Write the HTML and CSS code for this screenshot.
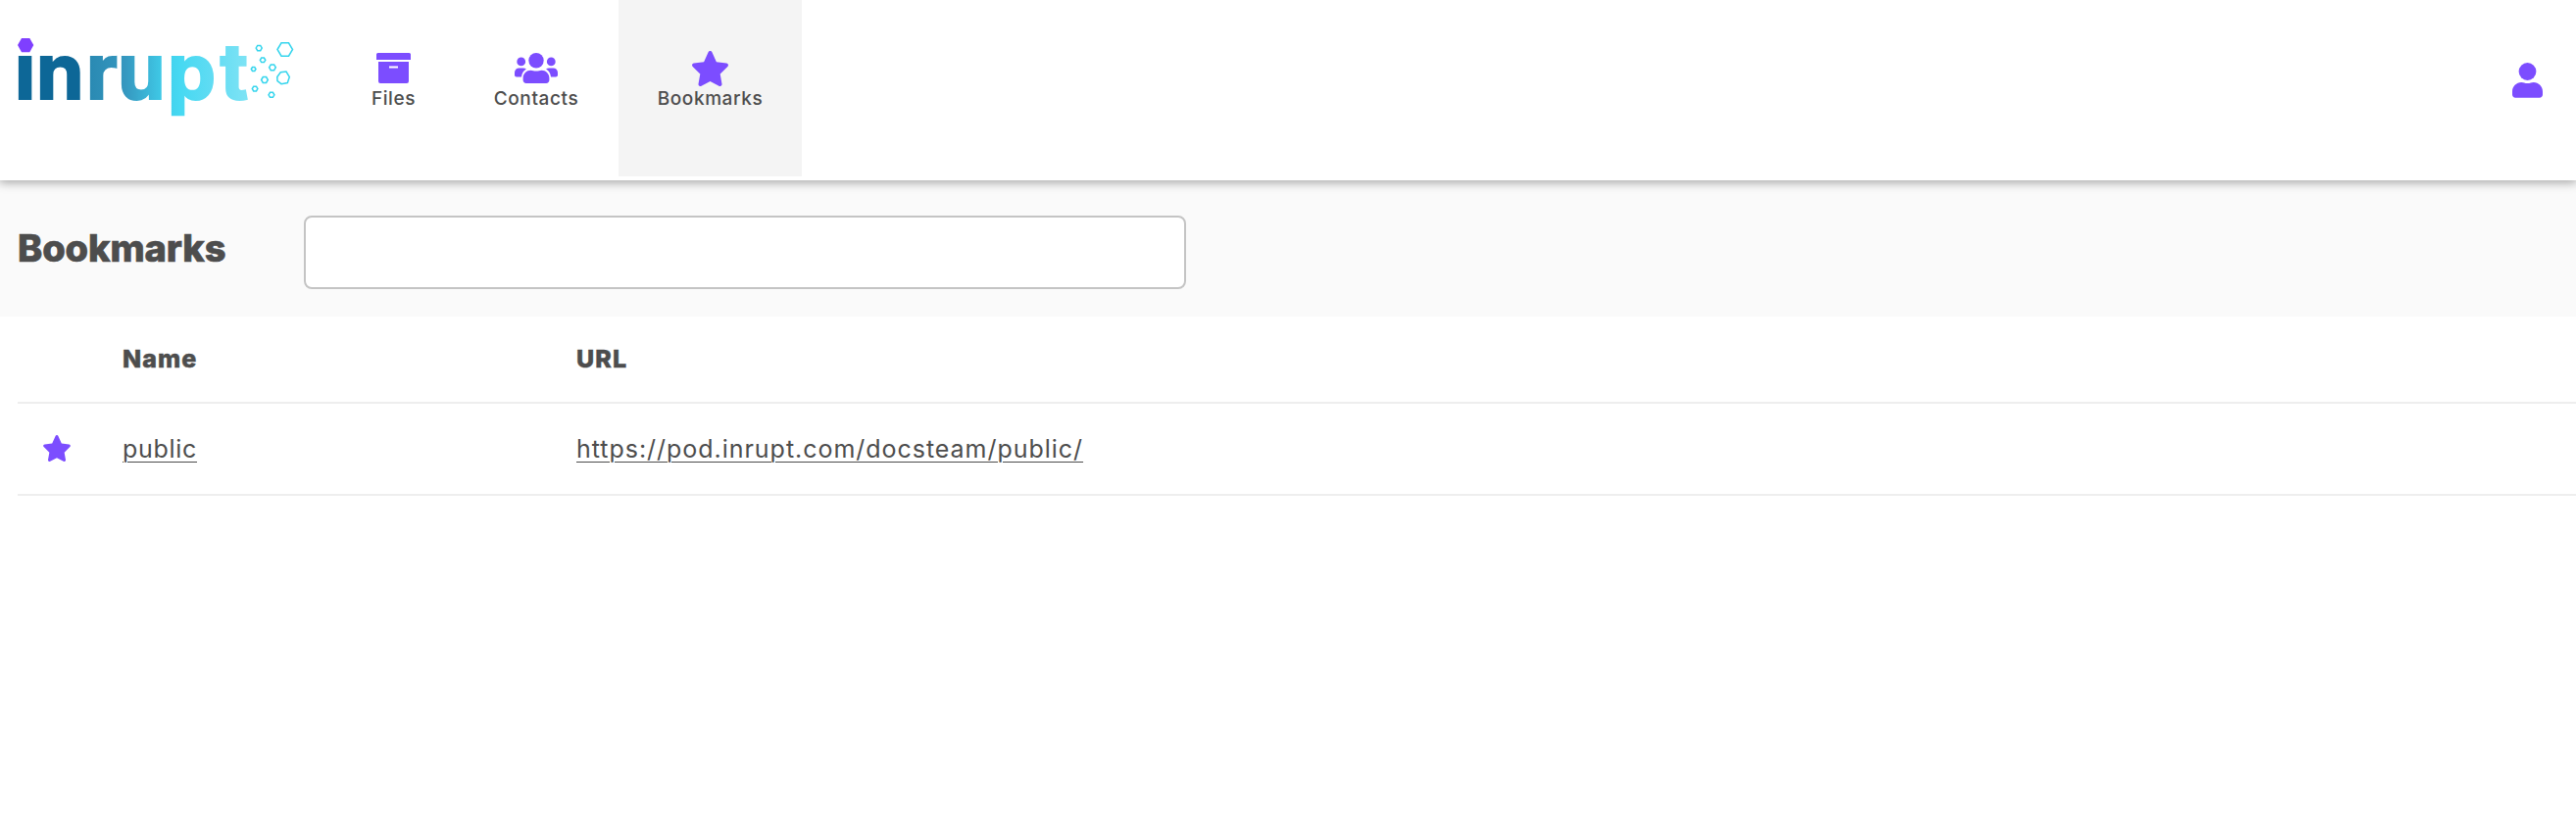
FILE: index.html
```html
<!DOCTYPE html>
<html lang="en">
<head>
<meta charset="utf-8">
<title>Bookmarks</title>
<link rel="stylesheet" href="styles.css">
</head>
<body>
<svg class="defs" width="0" height="0">
  <symbol id="star" viewBox="0 0 37 36"><path d="M16.6 1.2a2.1 2.1 0 0 1 3.8 0l4.5 10.1 10.2 1.2c1.8.3 2.5 2.3 1.2 3.6l-7.6 7.4 1.8 10.3c.2 1.7-1.5 2.7-3 2L18.5 31l-9 4.800c-1.500.7-3.200-.3-3-2l1.800-10.300L.7 16.100C-.6 14.800.1 12.800 1.900 12.500l10.200-1.200z"/></symbol>
</svg>
<header class="header">
  <a class="logo">
    <svg width="300" height="110" viewBox="0 20 300 110">
      <defs>
        <linearGradient id="g" gradientUnits="userSpaceOnUse" x1="19" y1="0" x2="255" y2="0">
          <stop offset="0" stop-color="#0d6797"/><stop offset=".28" stop-color="#0d6797"/><stop offset=".31" stop-color="#2a8ab3"/><stop offset=".46" stop-color="#3597bf"/><stop offset=".64" stop-color="#40d0ec"/><stop offset=".7" stop-color="#46d9f2"/><stop offset=".86" stop-color="#65dcf3"/><stop offset="1" stop-color="#80e4f5"/>
        </linearGradient>
      </defs>
      <text class="wordmark" x="15 37 88 120 171 224.500" y="101" fill="url(#g)">inrupt</text>
      <path fill="#fff" d="M14 35h24v22H14z"/>
      <path fill="#7f3fff" d="M18 46l4-7h8.300l4 7-4 7.200H22z"/>
      <g fill="none" stroke="#35d5ed" stroke-width="1.500">
        <path d="M283 50.500l4-6.700h7.500l4 6.700-4 6.700H287z"/>
        <path d="M282.800 78.500l3.500-4.700 5.700-.8 3.300 5.500-2 6-6.300 1.200-4-3z"/>
        <path d="M261.200 49l1.500-2.600h3l1.500 2.600-1.500 2.700h-3z"/>
        <path d="M265.300 61.300l1.400-2.300h2.700l1.400 2.300-1.400 2.300h-2.700z"/>
        <path d="M256.300 70.500l1.200-2h2.300l1.200 2-1.200 2h-2.300z"/>
        <path d="M274.600 68.800l1.700-2.900h3.300l1.700 2.900-1.700 2.900h-3.300z"/>
        <path d="M266.600 81.500l1.700-2.900h3.300l1.700 2.900-1.700 2.900h-3.300z"/>
        <path d="M257.300 90.600l1.400-2.400h2.800l1.400 2.400-1.400 2.400h-2.800z"/>
        <path d="M274 96.800l1.500-2.500h2.900l1.500 2.500-1.500 2.500h-2.900z"/>
      </g>
    </svg>
  </a>
  <nav class="nav">
    <a class="nav-item files"><svg width="35" height="31" viewBox="0 0 35 31"><path d="M1.500 0h32A1.500 1.500 0 0 1 35 1.500V7H0V1.500A1.500 1.500 0 0 1 1.500 0z"/><path fill-rule="evenodd" d="M2 9h31v20a2 2 0 0 1-2 2H4a2 2 0 0 1-2-2zM13 13.500v2h9v-2z"/></svg><span>Files</span></a>
    <a class="nav-item contacts"><svg width="44" height="31" viewBox="0 0 44 31"><circle cx="22" cy="7.700" r="7.700"/><circle cx="6.700" cy="8.900" r="4.400"/><circle cx="37.300" cy="8.900" r="4.400"/><path d="M4.500 15.500h4.400c1.200 0 2.200.4 3 1.100-3 1.700-4.500 4.500-4.900 7.800H2c-1.200 0-2-.8-2-2V20c0-2.500 2-4.500 4.500-4.500zM39.500 15.500h-4.400c-1.200 0-2.200.4-3 1.100 3 1.700 4.500 4.500 4.900 7.800h5c1.200 0 2-.8 2-2V20c0-2.500-2-4.500-4.500-4.500z"/><path d="M16.500 17.700c2 0 3 .9 5.500.9s3.500-.9 5.500-.9c4.300 0 7.900 3.500 7.900 7.800v2.300c0 1.800-1.400 3.200-3.200 3.200H11.800c-1.800 0-3.200-1.400-3.200-3.200v-2.300c0-4.300 3.600-7.800 7.900-7.800z"/></svg><span>Contacts</span></a>
    <a class="nav-item bookmarks active"><svg width="37" height="36"><use href="#star"/></svg><span>Bookmarks</span></a>
  </nav>
  <a class="user"><svg width="31" height="36" viewBox="0 0 31 36"><circle cx="15.500" cy="9" r="8.900"/><path d="M9.300 20c2.300 0 3.300 1.100 6.200 1.100S19.400 20 21.700 20C26.900 20 31 24.300 31 29.400v3.200c0 1.900-1.400 3.100-3.200 3.100H3.200C1.400 35.700 0 34.500 0 32.600v-3.200C0 24.300 4.100 20 9.300 20z"/></svg></a>
</header>
<section class="toolbar">
  <h1 class="title">Bookmarks</h1>
  <input class="search" type="text" aria-label="Search">
</section>
<main class="table">
  <div class="row head"><span></span><span>Name</span><span class="url-head">URL</span></div>
  <div class="row body-row"><svg class="row-star" width="28" height="27"><use href="#star"/></svg><span><a class="link name">public</a></span><span><a class="link url">https://pod.inrupt.com/docsteam/public/</a></span></div>
</main>
</body>
</html>
```
FILE: styles.css
```css
* { box-sizing: border-box; }
body { margin: 0; background: #fff; color: #4d4d4d; font-family: Inter, sans-serif; overflow: hidden; }
.defs { display: block; position: absolute; }
.header { display: flex; height: 184px; background: #fff; position: relative; box-shadow: 0 1px 10px 1px rgba(0,0,0,.36); }
.logo { width: 340px; padding-top: 20px; }
.logo svg { display: block; }
.wordmark { font: 700 78px Inter, sans-serif; stroke: url(#g); stroke-width: 2px; }
.nav { display: flex; height: 180px; }
.nav-item { display: flex; flex-direction: column; align-items: center; padding-top: 54px; fill: #7c4dff; font: 500 19px/24px Inter, sans-serif; letter-spacing: .6px; }
.nav-item svg { display: block; }
.nav-item span { margin-top: 4px; }
.files { width: 123px; }
.contacts { width: 168px; }
.bookmarks { width: 187px; padding-top: 52px; }
.bookmarks span { margin-top: 1px; }
.active { background: #f4f4f4; }
.user { margin-left: auto; padding: 64px 34px 0 0; fill: #7c4dff; }
.toolbar { display: flex; height: 139px; background: #fafafa; padding: 36px 18px; }
.title { width: 292px; margin: 9px 0 0; font: 800 38px/48px Inter, sans-serif; letter-spacing: -.1px; -webkit-text-stroke: .7px #4d4d4d; }
.search { width: 900px; height: 75px; border: 2px solid #c4c4c4; border-radius: 8px; background: #fff; }
.table { margin-left: 18px; }
.row { display: grid; grid-template-columns: 107px 463px 1fr; align-items: center; border-bottom: 2px solid #eee; }
.head { height: 89px; font: 800 25px/32px Inter, sans-serif; letter-spacing: 1.100px; -webkit-text-stroke: .5px #4d4d4d; }
.head span { padding-bottom: 2px; }
.body-row { height: 94px; font: 400 25px/32px Inter, sans-serif; letter-spacing: .97px; }
.name { letter-spacing: .7px; }
.row-star { margin: 0 0 2px 26px; fill: #7c4dff; }
.link { text-decoration: underline; text-decoration-thickness: 1px; text-underline-offset: 4px; }
```
